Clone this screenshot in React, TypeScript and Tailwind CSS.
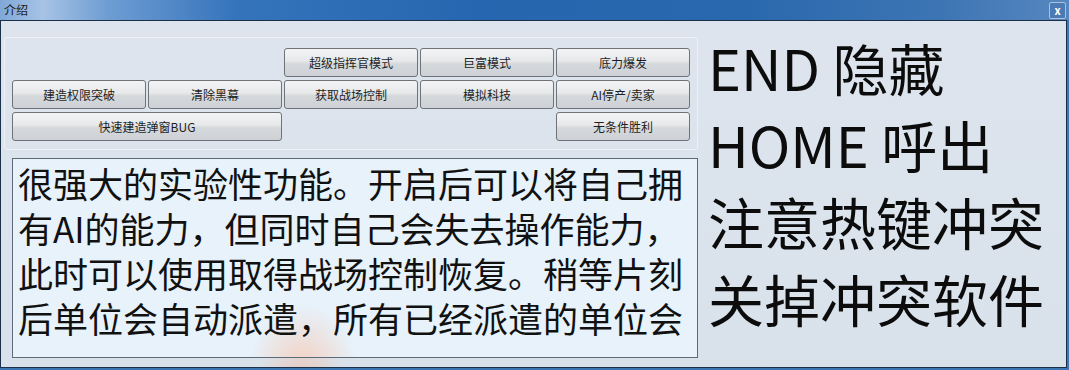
const FONT = { fontFamily: '"Noto Sans CJK SC", "Microsoft YaHei", sans-serif' }

type Btn = { label: string; cls: string }

const buttons: Btn[] = [
  { label: '超级指挥官模式', cls: 'col-start-3 row-start-1' },
  { label: '巨富模式', cls: 'col-start-4 row-start-1' },
  { label: '底力爆发', cls: 'col-start-5 row-start-1' },
  { label: '建造权限突破', cls: 'col-start-1 row-start-2' },
  { label: '清除黑幕', cls: 'col-start-2 row-start-2' },
  { label: '获取战场控制', cls: 'col-start-3 row-start-2' },
  { label: '模拟科技', cls: 'col-start-4 row-start-2' },
  { label: 'AI停产/卖家', cls: 'col-start-5 row-start-2' },
  { label: '快速建造弹窗BUG', cls: 'col-start-1 col-span-2 row-start-3' },
  { label: '无条件胜利', cls: 'col-start-5 row-start-3' },
]

const lines = [
  '很强大的实验性功能。开启后可以将自己拥',
  '有AI的能力，但同时自己会失去操作能力，',
  '此时可以使用取得战场控制恢复。稍等片刻',
  '后单位会自动派遣，所有已经派遣的单位会',
]

export default function App() {
  return (
    <div className="w-[1069px] h-[370px] overflow-hidden flex flex-col bg-[#3e76b3]" style={FONT}>
      {/* 标题栏 */}
      <div className="h-[20px] flex items-center justify-between bg-[image:linear-gradient(90deg,#7fa8d8_0%,#a7c3e5_4%,#6f9dd3_10%,#3574bb_22%,#2566b0_45%,#2a68ad_70%,#3d75b4_88%,#5787c0_100%)]">
        <span className="pl-[4px] text-[12px] leading-none text-[#1b1b1b]">介绍</span>
        <span className="mr-[3px] w-[17px] h-[17px] flex items-center justify-center rounded-[2px] border border-[#a9c3df] bg-[#4b7bb2] text-white text-[11px] font-bold leading-none">
          x
        </span>
      </div>

      {/* 窗体 */}
      <div className="flex-1 mr-[2px] mb-[2px] flex border border-[#1a2f48] bg-[#dbe3ec] bg-[image:radial-gradient(ellipse_45px_30px_at_300px_352px,rgba(255,170,130,0.45),rgba(255,170,130,0)),linear-gradient(180deg,#dde4ed,#d9e2eb)]">
        <div className="w-[697px] shrink-0 flex flex-col pl-[3px] pt-[16px]">
          <div className="w-[694px] h-[113px] rounded-[3px] border border-[#eef2f7] pl-[7px] pt-[10px]">
            <div className="grid grid-cols-[repeat(5,134px)] grid-rows-[repeat(3,29px)] gap-x-[2px] gap-y-[3px]">
              {buttons.map((b) => (
                <button
                  key={b.label}
                  className={`${b.cls} rounded-[3px] border border-[#6f7378] bg-[image:linear-gradient(180deg,#f3f4f5_0%,#e6e8ea_45%,#d6d9dc_55%,#cdd1d5_100%)] text-[12px] text-[#1e1e1e] flex items-center justify-center`}
                >
                  {b.label}
                </button>
              ))}
            </div>
          </div>

          <div className="ml-[8px] mt-[8px] w-[686px] h-[200px] border border-[#5d6b78] bg-[#e7f2fb] bg-[image:radial-gradient(ellipse_55px_70px_at_290px_215px,rgba(255,175,135,0.55),rgba(255,175,135,0))] pl-[5px] pt-[1px] text-[35px] leading-[45px] text-[#111]">
            {lines.map((l) => (
              <div key={l} className="whitespace-nowrap">{l}</div>
            ))}
          </div>
        </div>

        <div className="pl-[10px] pt-[7px] text-[56px] leading-[77px] text-[#0c0c0c] whitespace-nowrap">
          <div>END 隐藏</div>
          <div>HOME 呼出</div>
          <div>注意热键冲突</div>
          <div>关掉冲突软件</div>
        </div>
      </div>
    </div>
  )
}
